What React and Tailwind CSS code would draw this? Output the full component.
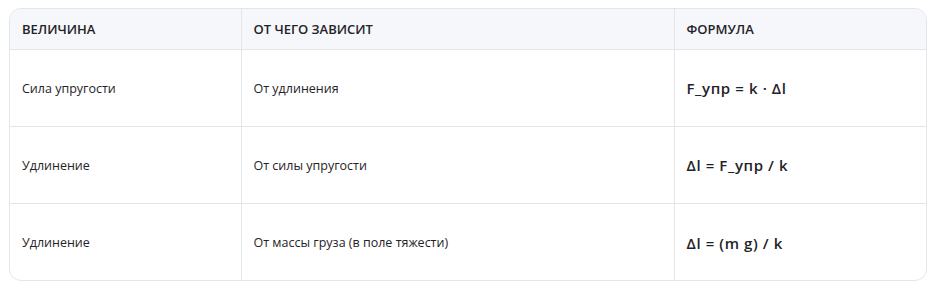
const rows = [
  { name: 'Сила упругости', dep: 'От удлинения', formula: 'F_упр = k · Δl' },
  { name: 'Удлинение', dep: 'От силы упругости', formula: 'Δl = F_упр / k' },
  { name: 'Удлинение', dep: 'От массы груза (в поле тяжести)', formula: 'Δl = (m g) / k' },
]

export default function App() {
  return (
    <div className="bg-white pt-2 pl-[9px] pr-2 font-['Open_Sans',sans-serif] text-[#1f2328]">
      <div className="overflow-hidden rounded-xl border border-[#e3e5eb]">
        <table className="w-full table-fixed border-collapse">
          <colgroup>
            <col className="w-[231px]" />
            <col className="w-[433px]" />
            <col />
          </colgroup>
          <thead>
            <tr className="h-[40px] bg-[#f6f7fa] text-left text-[13px] font-semibold uppercase">
              <th className="px-3 pt-px font-semibold">Величина</th>
              <th className="border-l border-[#e3e5eb] px-3 pt-px font-semibold">От чего зависит</th>
              <th className="border-l border-[#e3e5eb] px-3 pt-px font-semibold">Формула</th>
            </tr>
          </thead>
          <tbody>
            {rows.map((r, i) => (
              <tr key={i} className="h-[77px] border-t border-[#e3e5eb] text-[12.5px]">
                <td className="px-3 pt-[3px]">{r.name}</td>
                <td className="border-l border-[#e3e5eb] px-3 pt-[3px]">{r.dep}</td>
                <td className="border-l border-[#e3e5eb] px-3 pt-[2px] text-[15px] font-semibold tracking-[0.6px]">{r.formula}</td>
              </tr>
            ))}
          </tbody>
        </table>
      </div>
    </div>
  )
}
